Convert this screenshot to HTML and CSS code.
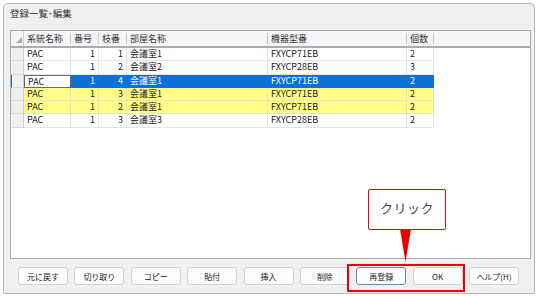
FILE: index.html
```html
<!DOCTYPE html>
<html lang="ja">
<head>
<meta charset="utf-8">
<title>登録一覧･編集</title>
<link rel="stylesheet" href="styles.css">
</head>
<body>
<div class="window">
  <div class="title">登録一覧･編集</div>
  <div class="grid">
    <div class="row head">
      <div class="c corner"><svg width="6" height="6" viewBox="0 0 6 6"><polygon points="6,0 6,6 0,6" fill="#a8a8a8"/></svg></div>
      <div class="c">系統名称</div>
      <div class="c">番号</div>
      <div class="c">枝番</div>
      <div class="c">部屋名称</div>
      <div class="c">機器型番</div>
      <div class="c">個数</div>
      <div class="c fill"></div>
    </div>
    <div class="row">
      <div class="c rh"></div><div class="c">PAC</div><div class="c num">1</div><div class="c num">1</div><div class="c">会議室1</div><div class="c">FXYCP71EB</div><div class="c">2</div>
    </div>
    <div class="row">
      <div class="c rh"></div><div class="c">PAC</div><div class="c num">1</div><div class="c num">2</div><div class="c">会議室2</div><div class="c">FXYCP28EB</div><div class="c">3</div>
    </div>
    <div class="row sel">
      <div class="c rh"></div><div class="c cur">PAC</div><div class="c num">1</div><div class="c num">4</div><div class="c">会議室1</div><div class="c">FXYCP71EB</div><div class="c">2</div>
    </div>
    <div class="row yel">
      <div class="c rh"></div><div class="c">PAC</div><div class="c num">1</div><div class="c num">3</div><div class="c">会議室1</div><div class="c">FXYCP71EB</div><div class="c">2</div>
    </div>
    <div class="row yel">
      <div class="c rh"></div><div class="c">PAC</div><div class="c num">1</div><div class="c num">2</div><div class="c">会議室1</div><div class="c">FXYCP71EB</div><div class="c">2</div>
    </div>
    <div class="row">
      <div class="c rh"></div><div class="c">PAC</div><div class="c num">1</div><div class="c num">3</div><div class="c">会議室3</div><div class="c">FXYCP28EB</div><div class="c">2</div>
    </div>
  </div>
  <div class="buttons">
    <button class="btn">元に戻す</button>
    <button class="btn">切り取り</button>
    <button class="btn">コピー</button>
    <button class="btn">貼付</button>
    <button class="btn">挿入</button>
    <button class="btn">削除</button>
    <button class="btn default">再登録</button>
    <button class="btn">OK</button>
    <button class="btn">ヘルプ(H)</button>
  </div>
</div>
<div class="hl"></div>
<div class="callout">クリック</div>
<svg class="pointer" width="12" height="34" viewBox="0 0 12 34"><polygon points="0,0 11,0 5.5,33" fill="#ee0000"/></svg>
</body>
</html>
```

FILE: styles.css
```css
* { box-sizing: border-box; }
html, body { margin: 0; padding: 0; }
body {
  width: 538px;
  height: 296px;
  background: #ffffff;
  font-family: "Noto Sans CJK JP", "Noto Sans", sans-serif;
  color: #222;
  overflow: hidden;
  position: relative;
}
.window {
  margin: 3px 0 0 3px;
  width: 532px;
  height: 291px;
  border: 1px solid #b8b8b8;
  border-radius: 5px 5px 0 0;
  background: #f0f0f0;
  padding: 0 3px 0 6px;
  display: flex;
  flex-direction: column;
}
.title {
  height: 26px;
  line-height: 19px;
  font-size: 9.5px;
  color: #333;
}
.grid {
  height: 229px;
  border: 1px solid #a4a8b4;
  background: #fff;
  display: flex;
  flex-direction: column;
}
.row {
  display: grid;
  grid-template-columns: 13px 47px 28px 28px 141px 139px 27px;
  height: 13.3px;
  flex: none;
  font-size: 9px;
  line-height: 12.3px;
}
.row .c {
  border-right: 1px solid #e4e4e4;
  border-bottom: 1px solid #e4e4e4;
  padding: 0 3px;
  white-space: nowrap;
  overflow: hidden;
}
.row .num { text-align: right; }
.row .rh {
  background: #f0f0f0;
  border-right: 1px solid #cfcfcf;
  border-bottom: 1px solid #dadada;
  border-left: 1px solid #fafafa;
}
.row.head {
  grid-template-columns: 13px 47px 28px 28px 141px 139px 27px 1fr;
  height: 17px;
  background: #f5f5f5;
  border-bottom: 2px solid #a8aab4;
  color: #333;
}
.row.head .c {
  border-bottom: none;
  border-right: none;
  position: relative;
  line-height: 15px;
}
.row.head .c::after {
  content: "";
  position: absolute;
  right: 0;
  top: 2px;
  height: 11px;
  border-right: 1px solid #c6c6c6;
}
.row.head .fill::after { display: none; }
.row.head .corner {
  display: flex;
  align-items: flex-end;
  justify-content: flex-end;
  padding: 0 1px 3px 0;
  border-right: 1px solid #d0d0d0;
}
.row.head .corner::after { display: none; }
.row.sel .c {
  background: #0a72d6;
  color: #fff;
  border-color: #0a72d6;
}
.row.sel .rh {
  background: #f0f0f0;
  border-right: 1px solid #cfcfcf;
  border-bottom: 1px solid #dadada;
}
.row.sel .cur {
  background: #fff;
  color: #222;
  border: 1px solid #6a6a6a;
}
.row.yel .c {
  background: #ffff88;
  border-color: #e6e6b8;
}
.row.yel .rh {
  background: #f0f0f0;
  border-right: 1px solid #cfcfcf;
  border-bottom: 1px solid #dadada;
}
.buttons {
  margin-top: 8px;
  padding: 0 12px 0 8px;
  display: flex;
  justify-content: space-between;
}
.btn {
  width: 50px;
  height: 18px;
  padding: 0;
  border: 1px solid #d2d2d2;
  border-radius: 3px;
  background: #fdfdfd;
  font-family: "Noto Sans CJK JP", "Noto Sans", sans-serif;
  font-size: 8px;
  color: #222;
}
.btn.default {
  border: 1px solid #5a8fc8;
}
.hl {
  position: absolute;
  left: 347px;
  top: 264px;
  width: 118px;
  height: 28px;
  border: 2px solid #ee0000;
}
.callout {
  position: absolute;
  left: 368px;
  top: 189px;
  width: 78px;
  height: 41px;
  border: 1.5px solid #ee0000;
  border-radius: 2px;
  background: #fff;
  font-size: 13px;
  line-height: 36px;
  text-align: center;
  color: #444;
  letter-spacing: 0.5px;
}
.pointer {
  position: absolute;
  left: 400px;
  top: 229px;
}
```
